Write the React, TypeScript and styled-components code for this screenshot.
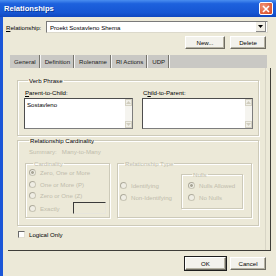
import styled, { createGlobalStyle } from "styled-components";

const GlobalStyle = createGlobalStyle`
  html, body {
    margin: 0;
    padding: 0;
    background: #ece9d8;
  }
  body {
    font-family: "Liberation Sans", Arial, sans-serif;
    font-size: 6.1px;
    color: #000;
  }
`;

const Window = styled.div`
  width: 276px;
  height: 276px;
  display: flex;
  flex-direction: column;
  overflow: hidden;
  background: #ece9d8;
`;

const TitleBar = styled.div`
  height: 17px;
  flex: none;
  box-sizing: border-box;
  display: flex;
  align-items: center;
  justify-content: space-between;
  padding: 0 3px 0 4px;
  background: linear-gradient(180deg, #4a8ef0 0%, #1d61dd 22%, #1656d3 75%, #0f47bf 100%);
  color: #fff;
  font-weight: bold;
  font-size: 7.6px;
  text-shadow: 1px 1px 0 #0b3a9a;
`;

const CloseButton = styled.div`
  width: 14px;
  height: 13px;
  box-sizing: border-box;
  border: 1px solid #fff;
  border-radius: 2px;
  background: radial-gradient(circle at 30% 30%, #f39374, #d6431d);
  display: flex;
  align-items: center;
  justify-content: center;
`;

const Client = styled.div`
  flex: 1;
  display: flex;
  flex-direction: column;
  border-left: 3px solid #1b56d7;
  padding-left: 3px;
`;

const RelRow = styled.div`
  display: flex;
  align-items: center;
  height: 12px;
  margin-top: 4px;
`;

const FieldLabel = styled.div<{ $w?: number }>`
  width: ${(p) => (p.$w ? `${p.$w}px` : "auto")};
  line-height: 7px;
  white-space: nowrap;
`;

const Key = styled.span`
  text-decoration: underline;
`;

const Combo = styled.div`
  width: 222px;
  height: 12px;
  box-sizing: border-box;
  display: flex;
  align-items: center;
  background: #fff;
  border-top: 1px solid #7a7a7a;
  border-left: 1px solid #7a7a7a;
  border-right: 1px solid #dcd9cc;
  border-bottom: 1px solid #dcd9cc;
`;

const ComboText = styled.div`
  flex: 1;
  padding-left: 3px;
  line-height: 7px;
`;

const ComboArrow = styled.div`
  width: 9px;
  height: 9px;
  margin-right: 1px;
  display: flex;
  align-items: center;
  justify-content: center;
  background: #f1efe6;
  border-right: 1px solid #8a8a8a;
  border-bottom: 1px solid #8a8a8a;
`;

const ButtonRow = styled.div`
  display: flex;
  justify-content: flex-end;
  gap: 5px;
  margin-top: 3px;
  padding-right: 10px;
`;

const Button = styled.div<{ $w: number; $default?: boolean }>`
  width: ${(p) => p.$w}px;
  height: 13px;
  box-sizing: border-box;
  display: flex;
  align-items: center;
  justify-content: center;
  line-height: 7px;
  background: #f3f2ec;
  border-top: 1px solid #fff;
  border-left: 1px solid #fff;
  border-right: 1px solid #6e6c62;
  border-bottom: 1px solid #6e6c62;
  box-shadow: ${(p) =>
    p.$default ? "0 0 0 1px #1e1e1e, inset -1px -1px 0 #b5b2a3" : "inset -1px -1px 0 #b5b2a3"};
`;

const TabStrip = styled.div`
  display: flex;
  width: 257px;
  height: 13px;
  margin-top: 6px;
  margin-left: 4px;
  background: #c9c8c4;
`;

const Tab = styled.div`
  display: flex;
  align-items: center;
  padding: 0 3px 0 4px;
  line-height: 7px;
  border-right: 1px solid #77756d;
  box-shadow: 1px 0 0 #f4f4f4;
  margin-right: 1px;
  color: #222;
`;

const TabPage = styled.div`
  width: 263px;
  height: 183px;
  box-sizing: border-box;
  margin-left: 2px;
  padding: 9px 0 0 9px;
  border-right: 1px solid #3e3d38;
  border-bottom: 1px solid #3e3d38;
  box-shadow: inset -4px 0 0 #ece9d8, inset -5px 0 0 #d8d5c6;
  display: flex;
  flex-direction: column;
`;

const Group = styled.fieldset<{ $w: number; $disabled?: boolean }>`
  width: ${(p) => p.$w}px;
  box-sizing: border-box;
  margin: 0;
  min-inline-size: 0;
  border: 1px solid #cdcab9;
  box-shadow: 1px 1px 0 #fff, inset 1px 1px 0 #fff;
  color: ${(p) => (p.$disabled ? "#c0bcac" : "#000")};
`;

const Legend = styled.legend`
  padding: 0 1px;
  margin-left: 4px;
  line-height: 7px;
`;

const VerbGroup = styled(Group)`
  padding: 0 5px 6px 6px;
`;

const Columns = styled.div`
  display: flex;
  gap: 9px;
`;

const Column = styled.div`
  display: flex;
  flex-direction: column;
`;

const ColLabel = styled(FieldLabel)`
  margin: 5px 0 2px 1px;
`;

const TextBox = styled.div<{ $w: number }>`
  width: ${(p) => p.$w}px;
  height: 31px;
  box-sizing: border-box;
  display: flex;
  background: #fff;
  border-top: 1px solid #4d4d4d;
  border-left: 1px solid #4d4d4d;
  border-right: 1px solid #7d7d7d;
  border-bottom: 1px solid #7d7d7d;
`;

const TextContent = styled.div`
  flex: 1;
  padding: 2px 2px;
  line-height: 7px;
`;

const ScrollBar = styled.div`
  width: 7px;
  display: flex;
  flex-direction: column;
  justify-content: space-between;
  background: #f5f4ef;
`;

const ScrollBtn = styled.div`
  height: 7px;
  box-sizing: border-box;
  border: 1px solid #d6d3c4;
  background: #f0efe8;
  display: flex;
  align-items: center;
  justify-content: center;
`;

const CardGroup = styled(Group)`
  margin-top: 1px;
  padding: 0 6px 7px 7px;
`;

const Summary = styled.div`
  margin: 4px 0 5px 4px;
  line-height: 7px;
  color: #c0bcac;
`;

const InnerRow = styled.div`
  display: flex;
  gap: 7px;
`;

const CardinalityGroup = styled(Group)`
  height: 58px;
  padding: 0 0 0 3px;
`;

const TypeGroup = styled(Group)`
  height: 58px;
  padding: 0 0 0 2px;
  display: flex;
`;

const TypeInner = styled.div`
  display: flex;
  gap: 8px;
`;

const TypeColumn = styled.div`
  margin-top: 13px;
  width: 53px;
`;

const NullsGroup = styled(Group)`
  margin-top: 4px;
  height: 38px;
  padding: 2px 0 0 6px;
`;

const OptionRow = styled.div<{ $h?: number }>`
  display: flex;
  align-items: center;
  gap: 4px;
  height: ${(p) => p.$h ?? 11.5}px;
  white-space: nowrap;
  line-height: 7px;
`;

const Radio = styled.span<{ $checked?: boolean }>`
  width: 7px;
  height: 7px;
  box-sizing: border-box;
  flex: none;
  border-radius: 50%;
  border: 1px solid #c9c6b6;
  border-top-color: #aeab9c;
  border-left-color: #aeab9c;
  background: ${(p) =>
    p.$checked ? "radial-gradient(circle, #a9a697 0 1.2px, #efede4 1.6px)" : "#efede4"};
`;

const SmallInput = styled.div`
  width: 33px;
  height: 12px;
  margin-left: 9px;
  box-sizing: border-box;
  border-top: 1px solid #3a3a3a;
  border-left: 1px solid #3a3a3a;
  border-right: 1px solid #e8e6dc;
  border-bottom: 1px solid #e8e6dc;
`;

const CheckRow = styled.div`
  display: flex;
  align-items: center;
  gap: 4px;
  margin-top: 5px;
  margin-left: 1px;
  line-height: 7px;
`;

const CheckBox = styled.span`
  width: 7px;
  height: 7px;
  box-sizing: border-box;
  background: #fff;
  border-top: 1px solid #6a6a6a;
  border-left: 1px solid #6a6a6a;
  border-right: 1px solid #e2dfd2;
  border-bottom: 1px solid #e2dfd2;
`;

const Footer = styled.div`
  display: flex;
  justify-content: flex-end;
  gap: 4px;
  margin-top: 6px;
  padding-right: 10px;
`;

const Arrow = ({ up, color }: { up?: boolean; color: string }) => (
  <svg width="5" height="3" viewBox="0 0 5 3">
    <path d={up ? "M0 3 L2.5 0 L5 3 Z" : "M0 0 L5 0 L2.5 3 Z"} fill={color} />
  </svg>
);

function MemoBox({ width, text }: { width: number; text?: string }) {
  return (
    <TextBox $w={width}>
      <TextContent>{text}</TextContent>
      <ScrollBar>
        <ScrollBtn>
          <Arrow up color="#cfccbd" />
        </ScrollBtn>
        <ScrollBtn>
          <Arrow color="#cfccbd" />
        </ScrollBtn>
      </ScrollBar>
    </TextBox>
  );
}

export default function App() {
  return (
    <Window>
      <GlobalStyle />
      <TitleBar>
        <span>Relationships</span>
        <CloseButton>
          <svg width="8" height="8" viewBox="0 0 8 8">
            <path d="M1 1 L7 7 M7 1 L1 7" stroke="#fff" strokeWidth="1.6" />
          </svg>
        </CloseButton>
      </TitleBar>
      <Client>
        <RelRow>
          <FieldLabel $w={40}>
            <Key>R</Key>elationship:
          </FieldLabel>
          <Combo>
            <ComboText>Proekt Sostavleno Shema</ComboText>
            <ComboArrow>
              <Arrow color="#000" />
            </ComboArrow>
          </Combo>
        </RelRow>
        <ButtonRow>
          <Button $w={40}>New...</Button>
          <Button $w={36}>Delete</Button>
        </ButtonRow>

        <TabStrip>
          <Tab>General</Tab>
          <Tab>Definition</Tab>
          <Tab>Rolename</Tab>
          <Tab>RI Actions</Tab>
          <Tab>UDP</Tab>
        </TabStrip>

        <TabPage>
          <VerbGroup $w={242}>
            <Legend>Verb Phrase</Legend>
            <Columns>
              <Column>
                <ColLabel>
                  <Key>P</Key>arent-to-Child:
                </ColLabel>
                <MemoBox width={109} text="Sostavleno" />
              </Column>
              <Column>
                <ColLabel>
                  C<Key>h</Key>ild-to-Parent:
                </ColLabel>
                <MemoBox width={111} />
              </Column>
            </Columns>
          </VerbGroup>

          <CardGroup $w={242}>
            <Legend>Relationship Cardinality</Legend>
            <Summary>Summary:&nbsp;&nbsp;&nbsp;Many-to-Many</Summary>
            <InnerRow>
              <CardinalityGroup $w={85} $disabled>
                <Legend>Cardinality</Legend>
                <OptionRow>
                  <Radio $checked />
                  Zero, One or More
                </OptionRow>
                <OptionRow>
                  <Radio />
                  One or More (P)
                </OptionRow>
                <OptionRow>
                  <Radio />
                  Zero or One (Z)
                </OptionRow>
                <OptionRow $h={13}>
                  <Radio />
                  Exactly
                  <SmallInput />
                </OptionRow>
              </CardinalityGroup>
              <TypeGroup $w={135} $disabled>
                <Legend>Relationship Type</Legend>
                <TypeInner>
                  <TypeColumn>
                    <OptionRow>
                      <Radio />
                      Identifying
                    </OptionRow>
                    <OptionRow>
                      <Radio />
                      Non-Identifying
                    </OptionRow>
                  </TypeColumn>
                  <NullsGroup $w={62} $disabled>
                    <Legend>Nulls</Legend>
                    <OptionRow>
                      <Radio $checked />
                      Nulls Allowed
                    </OptionRow>
                    <OptionRow>
                      <Radio />
                      No Nulls
                    </OptionRow>
                  </NullsGroup>
                </TypeInner>
              </TypeGroup>
            </InnerRow>
          </CardGroup>

          <CheckRow>
            <CheckBox />
            Logical Only
          </CheckRow>
        </TabPage>

        <Footer>
          <Button $w={41} $default>
            OK
          </Button>
          <Button $w={36}>Cancel</Button>
        </Footer>
      </Client>
    </Window>
  );
}
